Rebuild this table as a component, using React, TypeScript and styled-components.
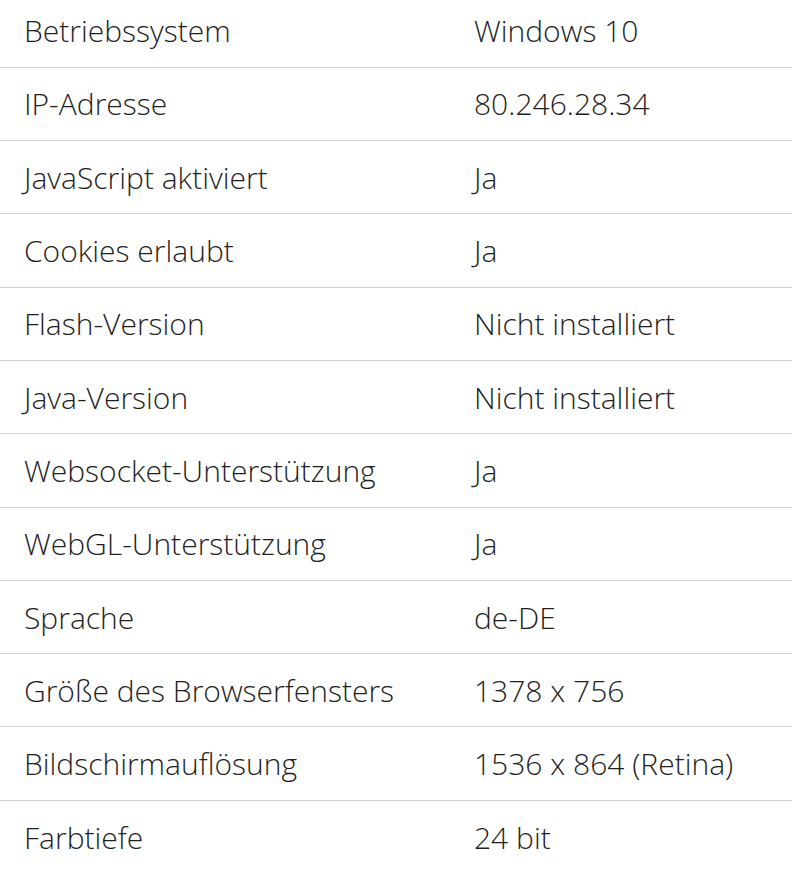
import React from "react";
import styled, { createGlobalStyle } from "styled-components";

const Global = createGlobalStyle`
  html, body { margin: 0; padding: 0; background: #fff; }
  body { font-family: "Open Sans", "Liberation Sans", sans-serif; overflow: hidden; }
`;

const Table = styled.div`
  display: flex;
  flex-direction: column;
  margin-top: -5.5px;
  width: 792px;
`;

const Row = styled.div`
  display: grid;
  grid-template-columns: 450px 1fr;
  align-items: center;
  height: 73.3px;
  box-sizing: border-box;
  border-bottom: 1px solid #cfcfcf;
  &:last-child { border-bottom: none; }
`;

const Cell = styled.div`
  padding-left: 24px;
  font-size: 30px;
  font-weight: 300;
  color: #1f1f1f;
  white-space: nowrap;
`;

const data: [string, string][] = [
  ["Betriebssystem", "Windows 10"],
  ["IP-Adresse", "80.246.28.34"],
  ["JavaScript aktiviert", "Ja"],
  ["Cookies erlaubt", "Ja"],
  ["Flash-Version", "Nicht installiert"],
  ["Java-Version", "Nicht installiert"],
  ["Websocket-Unterstützung", "Ja"],
  ["WebGL-Unterstützung", "Ja"],
  ["Sprache", "de-DE"],
  ["Größe des Browserfensters", "1378 x 756"],
  ["Bildschirmauflösung", "1536 x 864 (Retina)"],
  ["Farbtiefe", "24 bit"],
];

export default function App() {
  return (
    <>
      <Global />
      <Table>
        {data.map(([k, v]) => (
          <Row key={k}>
            <Cell>{k}</Cell>
            <Cell>{v}</Cell>
          </Row>
        ))}
      </Table>
    </>
  );
}
